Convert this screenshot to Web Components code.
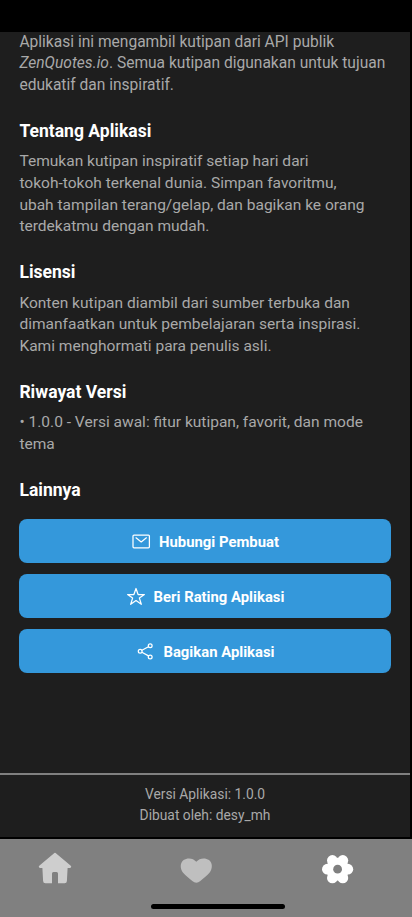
<!DOCTYPE html>
<html lang="id">
<head>
<meta charset="utf-8">
<title>Pengaturan</title>
<style>
html,body{margin:0;height:100%;background:#000;overflow:hidden}
body{font-family:Roboto,"Noto Sans",sans-serif}
</style>
</head>
<body>
<settings-screen></settings-screen>
<script>
function define(name, html) {
  const t = document.createElement('template');
  t.innerHTML = html;
  customElements.define(name, class extends HTMLElement {
    constructor() {
      super();
      this.attachShadow({mode: 'open'}).appendChild(t.content.cloneNode(true));
    }
  });
}

define('info-section', `
<style>
:host{display:block;padding-bottom:23px}
h2{margin:0 0 9.6px;font-size:17.55px;line-height:22px;font-weight:700;color:#fff}
.body{font-size:15.54px;line-height:21.65px;color:#a9a9a9;white-space:nowrap}
</style>
<h2><slot name="title"></slot></h2>
<div class="body"><slot></slot></div>`);

define('action-button', `
<style>
:host{display:flex;align-items:center;justify-content:center;gap:8px;height:43.5px;box-sizing:border-box;border-radius:8px;background:#3498db;color:#fff;font-size:14.85px;font-weight:700;line-height:20px;white-space:nowrap;padding-top:1.5px}
::slotted(svg){display:block;width:20px;height:20px;fill:none;stroke:#fff;stroke-linejoin:round;stroke-linecap:round}
</style>
<slot name="icon"></slot><span><slot></slot></span>`);

define('app-footer', `
<style>
:host{display:block;box-sizing:border-box;height:64px;border-top:2px solid #808080;padding-top:8.5px;text-align:center;color:#a9a9a9;font-size:13.8px;line-height:21px}
</style><slot></slot>`);

define('tab-bar', `
<style>
:host{display:grid;grid-template:60px 18px / 110px 172px 111px;box-sizing:border-box;height:78px;background:#808080}
svg{display:block;justify-self:center;align-self:center;width:34px;height:34px}
.pill{grid-column:1 / 4;grid-row:2;width:134px;height:5px;border-radius:3px;background:#000;margin:5px 0 0 151px}
</style>
<svg viewBox="0 0 34 34" fill="#cecece"><path d="M15.8 1.4Q17 .3 18.2 1.4L32.5 13.6Q34 15 32.6 15.8Q32.1 16.1 29.6 16.1L28.9 29Q28.8 31.2 26.6 31.2H20V21.6Q20 20 18.6 20H15.4Q14 20 14 21.6V31.2H7.4Q5.2 31.2 5.1 29L4.4 16.1Q1.9 16.1 1.4 15.8Q0 15 1.5 13.6Z"/></svg>
<svg viewBox="0 0 34 34" fill="#bfbfbf"><path d="M17.3 9.8C20.4 5.8 26.4 5.4 30 8.1C33.8 11.1 33.6 17 30.5 20.8C27.7 24.1 24.5 26.2 21.3 29Q17.3 32.4 13.3 29C10.1 26.2 6.9 24.1 4.1 20.8C1 17 .8 11.1 4.6 8.1C8.2 5.4 14.2 5.8 17.3 9.8Z"/></svg>
<svg viewBox="0 0 34 34" fill="#fff"><circle cx="6.4" cy="17.2" r="5.4"/><circle cx="26.8" cy="17.2" r="5.4"/><circle cx="11.4" cy="8.5" r="5.4"/><circle cx="21.8" cy="8.5" r="5.4"/><circle cx="11.4" cy="25.9" r="5.4"/><circle cx="21.8" cy="25.9" r="5.4"/><circle cx="16.6" cy="17.2" r="11.4"/><circle cx="16.6" cy="17.2" r="4.4" fill="#808080"/></svg>
<div class="pill"></div>`);

define('settings-screen', `
<style>
:host{display:flex;flex-direction:column;width:412px;height:917px;background:#000}
.screen{margin-top:32px;width:410px;height:805px;background:#1e1e1e;display:flex;flex-direction:column;overflow:hidden;margin-bottom:2px;flex:none}
main{flex:1;padding:0 19.4px;display:flex;flex-direction:column}
.intro{margin-top:-.3px;font-size:15.57px;line-height:21.65px;color:#a9a9a9;white-space:nowrap;padding-bottom:23.2px}
h2{margin:0 0 18.5px;font-size:17.55px;line-height:22px;color:#fff}
.actions{display:grid;gap:11.5px}
</style>
<div class="screen">
<main>
<div class="intro">Aplikasi ini mengambil kutipan dari API publik<br><i>ZenQuotes.io</i>. Semua kutipan digunakan untuk tujuan<br>edukatif dan inspiratif.</div>
<info-section><span slot="title">Tentang Aplikasi</span>Temukan kutipan inspiratif setiap hari dari<br>tokoh-tokoh terkenal dunia. Simpan favoritmu,<br>ubah tampilan terang/gelap, dan bagikan ke orang<br>terdekatmu dengan mudah.</info-section>
<info-section><span slot="title">Lisensi</span>Konten kutipan diambil dari sumber terbuka dan<br>dimanfaatkan untuk pembelajaran serta inspirasi.<br>Kami menghormati para penulis asli.</info-section>
<info-section><span slot="title">Riwayat Versi</span>• 1.0.0 - Versi awal: fitur kutipan, favorit, dan mode<br>tema</info-section>
<h2>Lainnya</h2>
<div class="actions">
<action-button><svg slot="icon" viewBox="0 0 20 20" stroke-width="1.25"><rect x="2" y="3" width="16.4" height="12.8" rx="1"/><path d="M5 5.8L10.2 9.9L15.4 5.8"/></svg>Hubungi Pembuat</action-button>
<action-button><svg slot="icon" viewBox="0 0 20 20" stroke-width="1.25"><path d="M10 1.5L12.1 7.5H18.4L13.4 11.1L15.3 17.3L10 13.6L4.7 17.3L6.6 11.1L1.6 7.5H7.9Z"/></svg>Beri Rating Aplikasi</action-button>
<action-button><svg slot="icon" viewBox="0 0 20 20" stroke-width="1.25"><circle cx="5.2" cy="9.3" r="1.9"/><circle cx="15.2" cy="3.7" r="1.9"/><circle cx="15.2" cy="14.9" r="1.9"/><path d="M6.9 8.3L13.5 4.7M6.9 10.3L13.5 13.9"/></svg>Bagikan Aplikasi</action-button>
</div>
</main>
<app-footer>Versi Aplikasi: 1.0.0<br>Dibuat oleh: desy_mh</app-footer>
</div>
<tab-bar></tab-bar>`);
</script>
</body>
</html>
